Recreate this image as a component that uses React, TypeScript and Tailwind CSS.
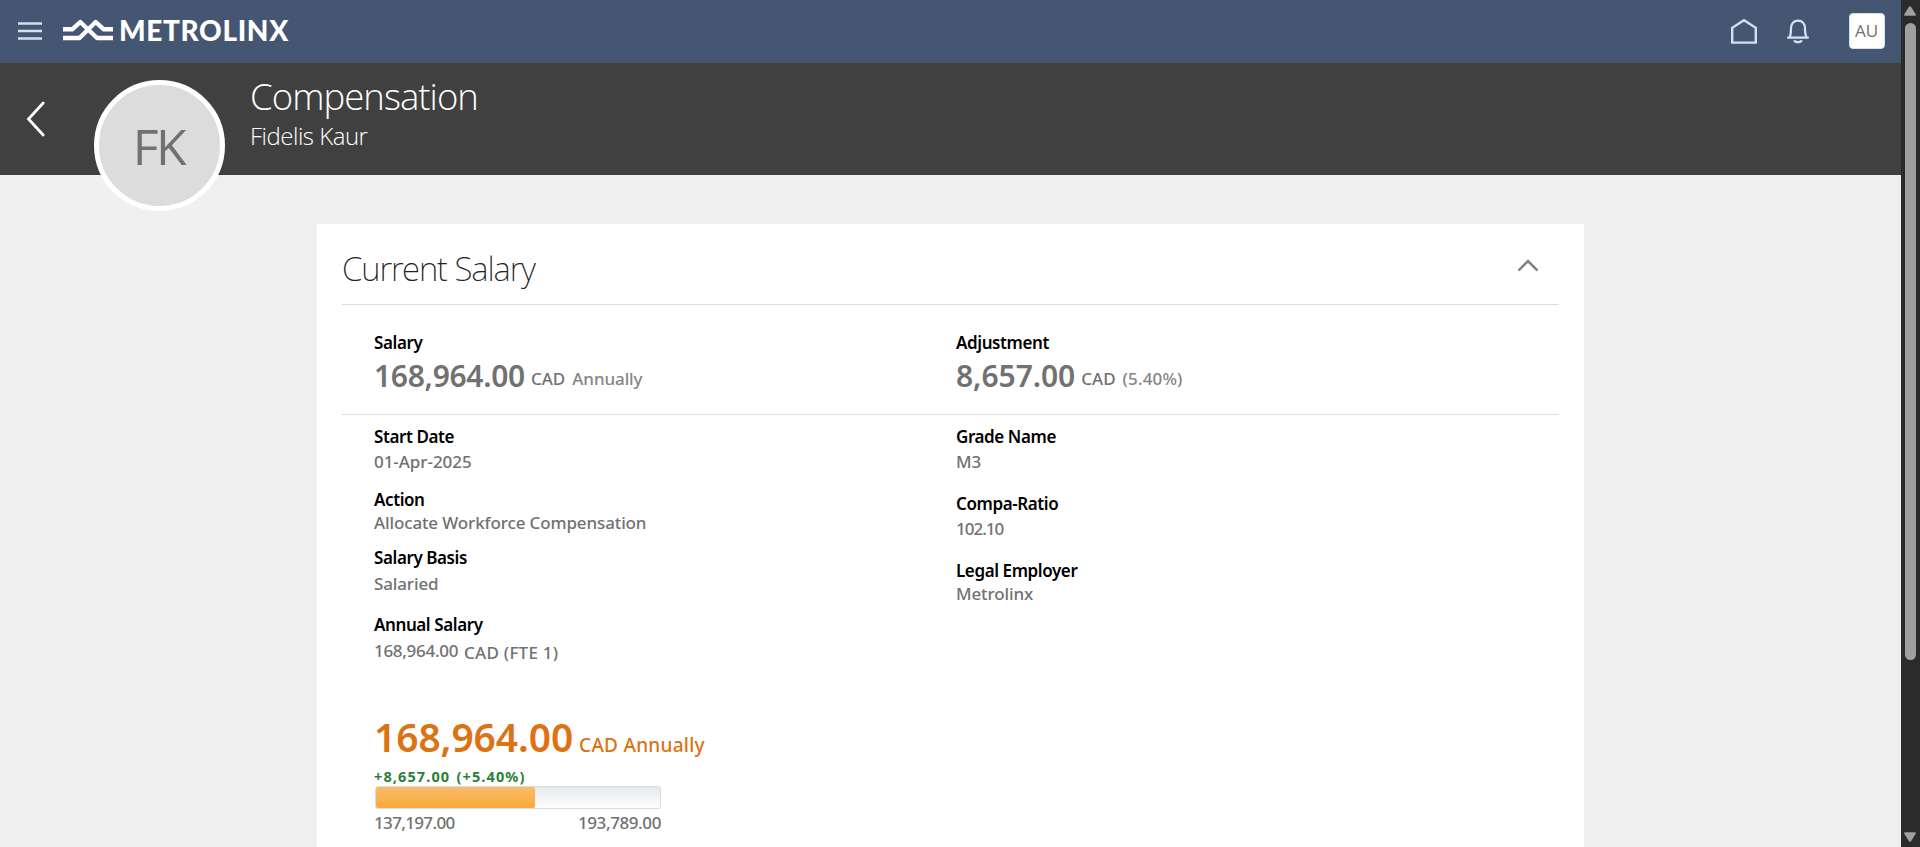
import type { ReactNode } from "react";

function Label({ children, className = "" }: { children: ReactNode; className?: string }) {
  return (
    <div className={`h-5 whitespace-nowrap text-[17px] leading-[22px] font-semibold tracking-[-0.41px] text-black ${className}`}>
      {children}
    </div>
  );
}

function Value({ children, className = "" }: { children: ReactNode; className?: string }) {
  return (
    <div className={`h-5 whitespace-nowrap text-[17px] leading-[22px] font-medium text-[#717171] ${className}`}>
      {children}
    </div>
  );
}

function TopBar() {
  return (
    <header className="flex h-[63px] shrink-0 items-center bg-[#455673] pr-4 pl-[18px]">
      <svg width="24" height="18" viewBox="0 0 24 18" className="mt-[-1px] shrink-0">
        <path d="M0 1.5H24M0 9H24M0 16.5H24" stroke="#d5dfed" strokeWidth="2.4" />
      </svg>
      <svg width="52" height="22" viewBox="0 0 52 22" className="mt-[-3px] ml-5 shrink-0" fill="none" stroke="#fff" strokeWidth="4.4">
        <path d="M1 10.2H10.5L18.3 3L35 19H51" strokeLinejoin="round" />
        <path d="M1 19H17.5L33.7 3L41.5 10.2H51" strokeLinejoin="round" />
      </svg>
      <div className="mt-[-4px] ml-[5px] font-[Lato] text-[28px] leading-8 font-black tracking-[0.65px] text-white">METROLINX</div>
      <div className="ml-auto flex items-center">
        <svg width="28" height="28" viewBox="0 0 28 28" fill="none" stroke="#d5dfed" strokeWidth="2.4" className="mt-[-2px]">
          <path d="M2.2 25.6V10.8L14 3.2L25.8 10.8V25.6Z" />
        </svg>
        <svg width="24" height="28" viewBox="0 0 24 28" fill="none" stroke="#d5dfed" strokeWidth="2.3" className="mt-[-2px] ml-7">
          <path d="M1.2 20.6H22.8" />
          <path d="M3.6 20C4.8 18 5 16 5 11.5C5 6.5 7.8 3.6 12 3.6S19 6.5 19 11.5C19 16 19.2 18 20.4 20" />
          <path d="M8.3 23.2C9 25.8 15 25.8 15.7 23.2" />
        </svg>
        <div className="mt-[-1px] ml-[39px] flex h-9 w-9 items-center justify-center rounded border border-[#d5dfed] bg-white pr-px font-['Open_Sans'] text-[17px] text-[#717171]">
          AU
        </div>
      </div>
    </header>
  );
}

function PageBanner() {
  return (
    <div className="flex h-28 shrink-0 items-start bg-[#404040]">
      <svg width="20" height="36" viewBox="0 0 20 36" fill="none" stroke="#fff" strokeWidth="2.8" strokeLinecap="round" className="mt-[38px] ml-[26px] shrink-0">
        <path d="M17.2 2L2.5 18L17.2 34" />
      </svg>
      <div className="relative z-10 mt-[17px] ml-12 flex h-[131px] w-[131px] shrink-0 items-center justify-center rounded-full border-[5px] border-white bg-[#dcdcdc] pt-[2px] pr-[2px] font-['Open_Sans'] text-[50px] tracking-[-2.5px] text-[#717171]">
        FK
      </div>
      <div className="mt-[13px] ml-[25px] font-['Open_Sans'] font-light text-white">
        <h1 className="h-10 text-[36.5px] leading-10 tracking-[-0.95px]">Compensation</h1>
        <div className="mt-[6px] h-7 text-2xl leading-7 tracking-[-0.5px]">Fidelis Kaur</div>
      </div>
    </div>
  );
}

function SalaryRange() {
  return (
    <div className="mt-[57px]">
      <div className="flex h-10 items-baseline leading-10 whitespace-nowrap text-[#dd7213]">
        <span className="text-[39px] font-[560] tracking-[-0.1px]">168,964.00</span>
        <span className="ml-[6px] text-[19px] font-medium tracking-[0.25px]">CAD Annually</span>
      </div>
      <div className="mt-[11px] h-4 text-[14.5px] leading-4 font-bold tracking-[1.1px] whitespace-nowrap text-[#2c7f38] [word-spacing:1.5px]">
        +8,657.00 (+5.40%)
      </div>
      <div className="mt-[2px] ml-px h-[23px] w-[286px] rounded-[3px] border border-[#d3dde6] bg-linear-to-b from-[#e6e8ea] to-white">
        <div className="h-full w-[159px] rounded-[2px] bg-linear-to-b from-[#fbbb67] to-[#fba939]" />
      </div>
      <div className="mt-[3px] flex w-[287px] justify-between">
        <Value className="tracking-[-0.65px]">137,197.00</Value>
        <Value className="tracking-[-0.4px]">193,789.00</Value>
      </div>
    </div>
  );
}

function CurrentSalaryCard() {
  return (
    <section className="mt-[49px] ml-[317px] h-[623px] w-[1267px] shrink-0 bg-white px-[25px] pt-6">
      <div className="flex h-[57px] justify-between border-b border-[#d6dfe6] pr-5">
        <h2 className="h-10 text-[33px] leading-[42px] font-extralight tracking-[-1.05px] text-[#222]">Current Salary</h2>
        <svg width="22" height="14" viewBox="0 0 22 14" fill="none" stroke="#808285" strokeWidth="2.5" strokeLinecap="round" className="mt-[10px]">
          <path d="M2.2 11.8L11 3L19.8 11.8" />
        </svg>
      </div>
      <div className="grid h-[110px] grid-cols-[582px_1fr] border-b border-[#d6dfe6] pt-[27px] pl-8">
        <div>
          <Label>Salary</Label>
          <div className="mt-[3px] flex h-10 items-baseline text-[17px] leading-[42px] font-medium text-[#717171]">
            <span className="text-[30px] font-[560] tracking-[-0.3px]">168,964.00</span>
            <span className="ml-[6px] -translate-y-[2px]">CAD</span>
            <span className="ml-[7px] -translate-y-[2px] tracking-[-0.1px] text-[#858585]">Annually</span>
          </div>
        </div>
        <div>
          <Label>Adjustment</Label>
          <div className="mt-[3px] flex h-10 items-baseline text-[17px] leading-[42px] font-medium text-[#717171]">
            <span className="text-[30px] font-[560] tracking-[-0.05px]">8,657.00</span>
            <span className="ml-[6px] -translate-y-[2px]">CAD</span>
            <span className="ml-[7px] -translate-y-[2px] tracking-[0.15px] text-[#858585]">(5.40%)</span>
          </div>
        </div>
      </div>
      <div className="grid grid-cols-[582px_1fr] pt-[11px] pl-8">
        <div>
          <Label>Start Date</Label>
          <Value className="mt-[5px] tracking-[-0.05px]">01-Apr-2025</Value>
          <Label className="mt-[18px]">Action</Label>
          <Value className="mt-[3px] tracking-[-0.13px]">Allocate Workforce Compensation</Value>
          <Label className="mt-[15px]">Salary Basis</Label>
          <Value className="mt-[6px] tracking-[-0.13px]">Salaried</Value>
          <Label className="mt-[21px]">Annual Salary</Label>
          <div className="mt-[6px] flex h-5">
            <Value className="tracking-[-0.3px]">168,964.00</Value>
            <Value className="mt-[1.5px] ml-[6px] tracking-[0.25px]">CAD (FTE 1)</Value>
          </div>
          <SalaryRange />
        </div>
        <div>
          <Label>Grade Name</Label>
          <Value className="mt-[5px]">M3</Value>
          <Label className="mt-[22px] tracking-[-0.2px]">Compa-Ratio</Label>
          <Value className="mt-[5px] tracking-[-1px]">102.10</Value>
          <Label className="mt-[22px]">Legal Employer</Label>
          <Value className="mt-[3px] tracking-[-0.13px]">Metrolinx</Value>
        </div>
      </div>
    </section>
  );
}

function Scrollbar() {
  return (
    <div className="flex h-full w-[19px] shrink-0 flex-col items-center bg-[#2b2b2b] pr-px">
      <svg width="12" height="10" viewBox="0 0 12 10" className="mt-[6px]" fill="#9f9f9f">
        <path d="M5 .8Q6 -.4 7 .8L11.7 8.2Q12.2 9.8 10.8 9.8H1.2Q-.2 9.8 .3 8.2Z" />
      </svg>
      <div className="mt-[7px] h-[637px] w-[11px] rounded-full bg-[#9f9f9f]" />
      <svg width="12" height="10" viewBox="0 0 12 10" className="mt-auto mb-[5px]" fill="#9f9f9f">
        <path d="M5 9.2Q6 10.4 7 9.2L11.7 1.8Q12.2 .2 10.8 .2H1.2Q-.2 .2 .3 1.8Z" />
      </svg>
    </div>
  );
}

export default function App() {
  return (
    <div className="flex h-[847px] w-[1920px] overflow-hidden bg-[#f0f0f0] font-['Noto_Sans',sans-serif]">
      <div className="flex h-full w-[1901px] flex-col">
        <TopBar />
        <PageBanner />
        <CurrentSalaryCard />
      </div>
      <Scrollbar />
    </div>
  );
}
